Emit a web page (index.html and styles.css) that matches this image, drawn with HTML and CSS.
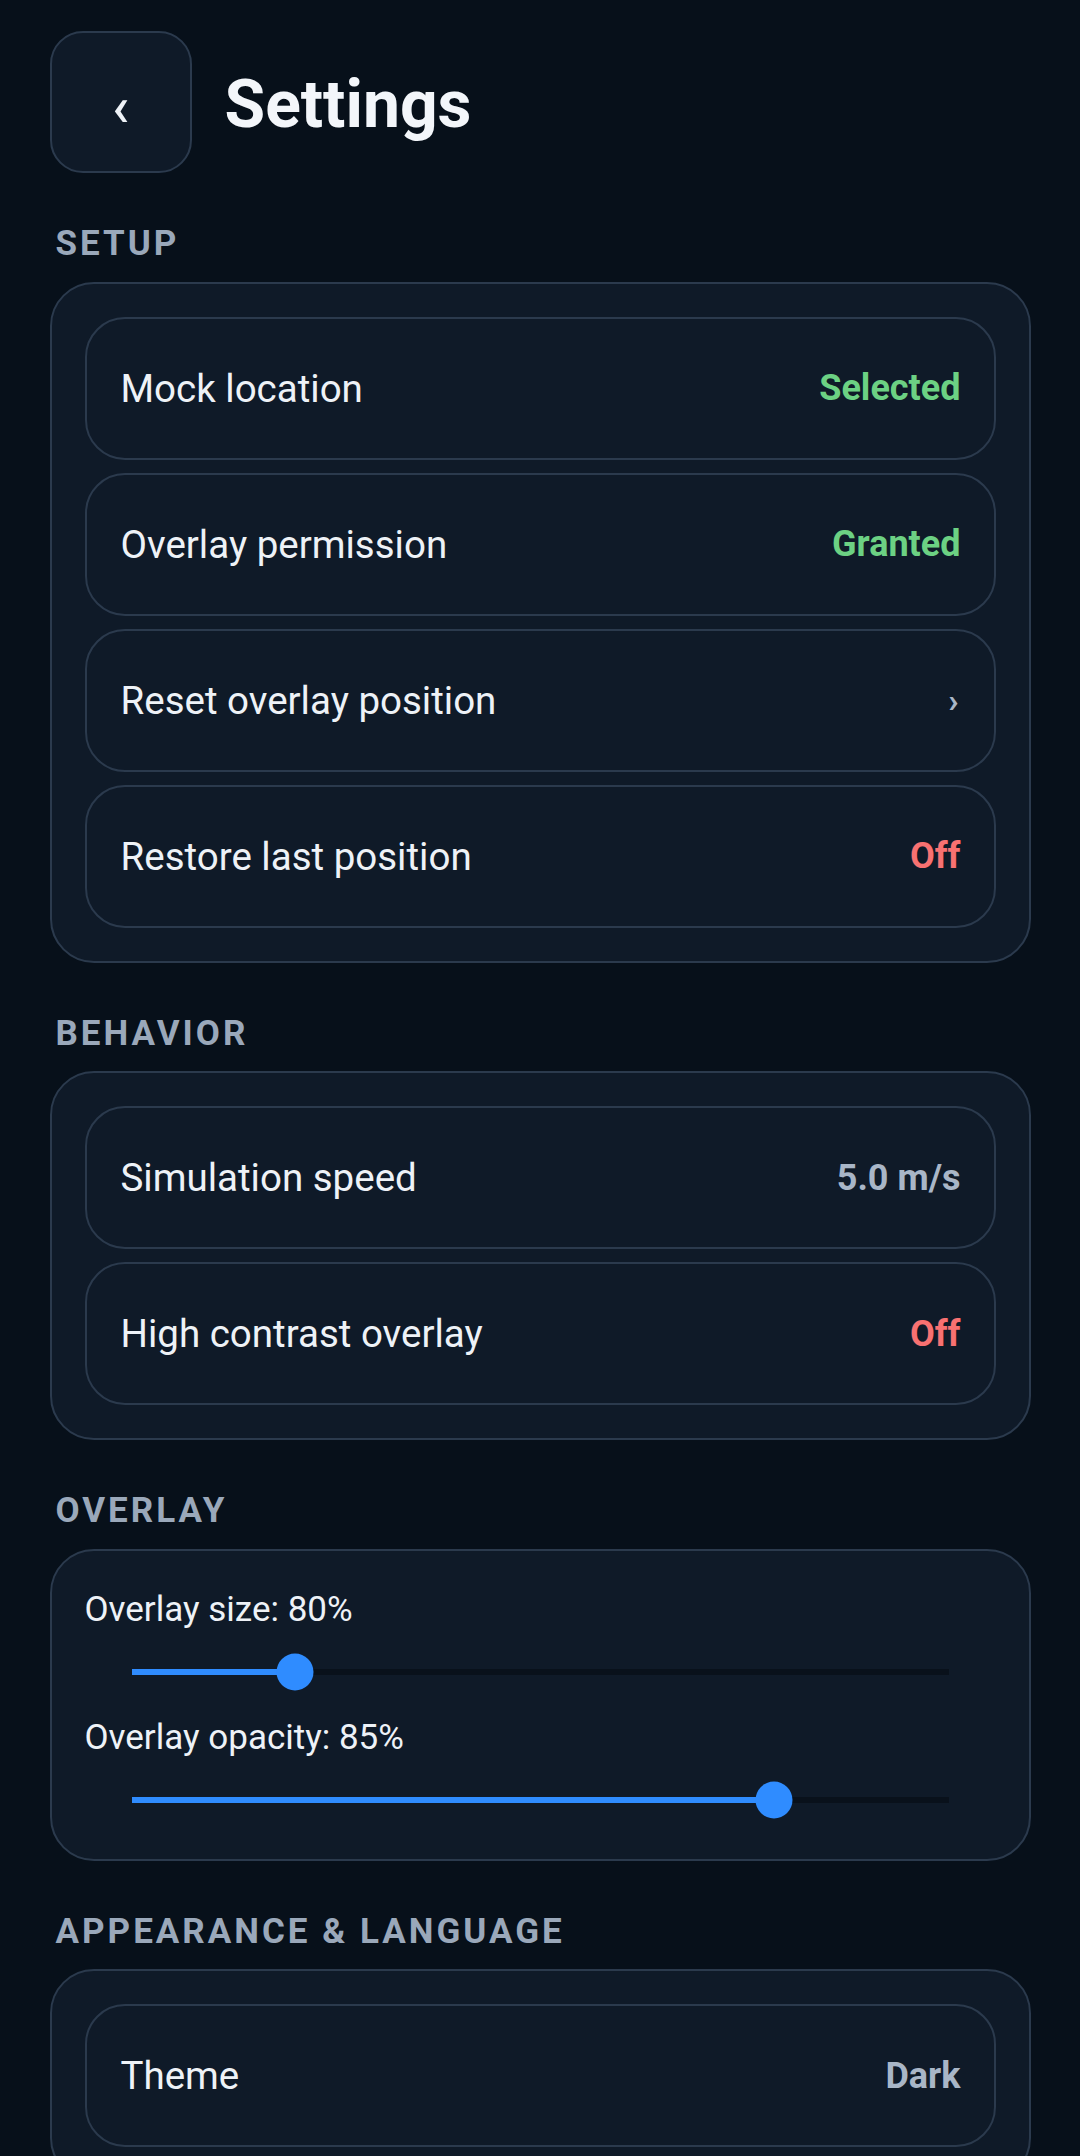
FILE: index.html
```html
<!DOCTYPE html>
<html lang="en">
<head>
    <meta charset="UTF-8">
    <meta name="viewport" content="width=device-width, initial-scale=1.0">
    <title>Settings</title>
    <link rel="stylesheet" href="styles.css">
</head>
<body>
    <div class="page">
        <div class="header">
            <button class="back-btn">&lsaquo;</button>
            <h1 class="title">Settings</h1>
        </div>

        <p class="section-label">SETUP</p>
        <div class="card">
            <div class="row">
                <span class="row-label">Mock location</span>
                <span class="row-value good">Selected</span>
            </div>
            <div class="row">
                <span class="row-label">Overlay permission</span>
                <span class="row-value good">Granted</span>
            </div>
            <div class="row">
                <span class="row-label">Reset overlay position</span>
                <span class="row-value chevron">&rsaquo;</span>
            </div>
            <div class="row">
                <span class="row-label">Restore last position</span>
                <span class="row-value bad">Off</span>
            </div>
        </div>

        <p class="section-label">BEHAVIOR</p>
        <div class="card">
            <div class="row">
                <span class="row-label">Simulation speed</span>
                <span class="row-value">5.0 m/s</span>
            </div>
            <div class="row">
                <span class="row-label">High contrast overlay</span>
                <span class="row-value bad">Off</span>
            </div>
        </div>

        <p class="section-label">OVERLAY</p>
        <div class="card slider-card">
            <div class="slider-group">
                <p class="slider-label">Overlay size: 80%</p>
                <div class="slider">
                    <div class="track">
                        <div class="fill" style="width: 20%"></div>
                        <div class="thumb" style="left: 20%"></div>
                    </div>
                </div>
            </div>
            <div class="slider-group">
                <p class="slider-label">Overlay opacity: 85%</p>
                <div class="slider">
                    <div class="track">
                        <div class="fill" style="width: 78.6%"></div>
                        <div class="thumb" style="left: 78.6%"></div>
                    </div>
                </div>
            </div>
        </div>

        <p class="section-label">APPEARANCE &amp; LANGUAGE</p>
        <div class="card">
            <div class="row">
                <span class="row-label">Theme</span>
                <span class="row-value">Dark</span>
            </div>
        </div>
    </div>
</body>
</html>
```

FILE: styles.css
```css
:root {
    --bg: #07101a;
    --surface: #0f1a28;
    --line: #2b3a4d;
    --text: #eef2f7;
    --muted: #9aa8ba;
    --accent: #2f8cff;
}

body {
    margin: 0;
    background-color: var(--bg);
    font-family: Roboto, "Noto Sans", sans-serif;
    color: var(--text);
}

.page {
    padding: 31px 49.5px 60px;
}

.header {
    display: flex;
    align-items: center;
    gap: 33px;
}

.back-btn {
    width: 142px;
    height: 142px;
    box-sizing: border-box;
    border: 2.75px solid var(--line);
    border-radius: 33px;
    background-color: var(--surface);
    color: var(--text);
    font-family: Roboto, sans-serif;
    font-size: 56px;
    font-weight: 500;
    padding: 10px 0 0 0;
    display: flex;
    align-items: center;
    justify-content: center;
}

.title {
    margin: 0;
    padding-top: 4px;
    font-size: 66px;
    font-weight: 700;
    color: #f3f6fa;
}

.section-label {
    margin: 53px 0 20.5px 6px;
    font-size: 35px;
    line-height: 35px;
    font-weight: 700;
    letter-spacing: 3px;
    color: var(--muted);
}

.card {
    background-color: var(--surface);
    border: 2.75px solid var(--line);
    border-radius: 44px;
    padding: 33px;
    display: flex;
    flex-direction: column;
    gap: 13px;
}

.row {
    height: 143px;
    box-sizing: border-box;
    border: 2.75px solid var(--line);
    border-radius: 40px;
    padding: 0 33px 0 34px;
    display: flex;
    align-items: center;
    justify-content: space-between;
}

.row-label {
    font-size: 38.5px;
}

.row-value {
    font-size: 36px;
    font-weight: 700;
    color: #a9b6c7;
}

.row-value.good {
    color: #6cd183;
}

.row-value.bad {
    color: #f87171;
}

.row-value.chevron {
    font-size: 34px;
    padding-right: 2px;
}

.slider-card {
    gap: 16px;
    padding-bottom: 35px;
}

.slider-label {
    margin: 0;
    font-size: 35px;
    line-height: 52px;
}

.slider {
    height: 60px;
    padding: 0 47px;
}

.track {
    position: relative;
    top: 33px;
    height: 6px;
    background-color: #09111b;
}

.fill {
    height: 100%;
    background-color: var(--accent);
}

.thumb {
    position: absolute;
    top: 50%;
    width: 37px;
    height: 37px;
    border-radius: 50%;
    background-color: var(--accent);
    transform: translate(-50%, -50%);
}
```
